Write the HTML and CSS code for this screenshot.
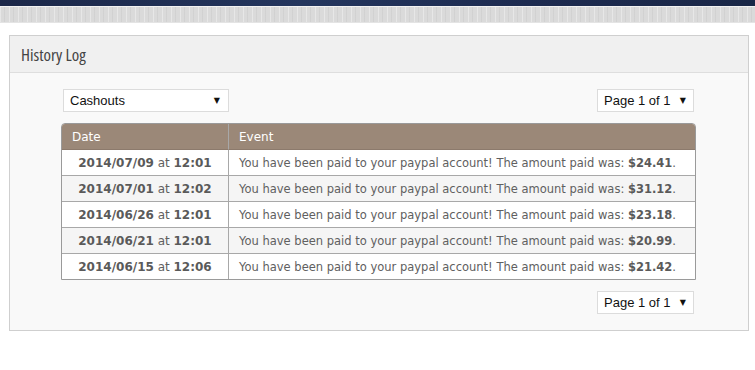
FILE: index.html
```html
<!DOCTYPE html>
<html lang="en">
<head>
  <meta charset="UTF-8" />
  <title>History Log</title>
  <link rel="stylesheet" href="styles.css">
</head>
<body>

  <!-- Top bars -->
  <div class="topbar"></div>
  <div class="subbar"></div>

  <!-- History panel -->
  <div class="panel">
    <div class="panel-head">History Log</div>
    <div class="panel-body">

      <div class="controls">
        <div class="pick pick-type">
          <select>
            <option>Cashouts</option>
            <option>Earnings</option>
          </select>
        </div>
        <div class="pick pick-page">
          <select>
            <option>Page 1 of 1</option>
          </select>
        </div>
      </div>

      <table class="log">
        <thead>
          <tr>
            <th class="col-date">Date</th>
            <th>Event</th>
          </tr>
        </thead>
        <tbody>
          <tr>
            <td class="col-date"><b>2014/07/09</b> at <b>12:01</b></td>
            <td>You have been paid to your paypal account! The amount paid was: <b>$24.41</b>.</td>
          </tr>
          <tr>
            <td class="col-date"><b>2014/07/01</b> at <b>12:02</b></td>
            <td>You have been paid to your paypal account! The amount paid was: <b>$31.12</b>.</td>
          </tr>
          <tr>
            <td class="col-date"><b>2014/06/26</b> at <b>12:01</b></td>
            <td>You have been paid to your paypal account! The amount paid was: <b>$23.18</b>.</td>
          </tr>
          <tr>
            <td class="col-date"><b>2014/06/21</b> at <b>12:01</b></td>
            <td>You have been paid to your paypal account! The amount paid was: <b>$20.99</b>.</td>
          </tr>
          <tr>
            <td class="col-date"><b>2014/06/15</b> at <b>12:06</b></td>
            <td>You have been paid to your paypal account! The amount paid was: <b>$21.42</b>.</td>
          </tr>
        </tbody>
      </table>

      <div class="controls controls-bottom">
        <div class="pick pick-page">
          <select>
            <option>Page 1 of 1</option>
          </select>
        </div>
      </div>

    </div>
  </div>

</body>
</html>
```

FILE: styles.css
```css
body {
  margin: 0;
  background-color: #fff;
  font-family: "DejaVu Sans", Verdana, sans-serif;
  color: #606060;
}

.topbar {
  height: 6px;
  background: linear-gradient(90deg, #1b2748 0%, #24365e 40%, #1d2b50 70%, #1a2747 100%);
}

.subbar {
  height: 15px;
  border-top: 1px solid #f2f2f2;
  background-color: #dadada;
  background-image: repeating-linear-gradient(90deg, rgba(255,255,255,0.35) 0 1px, transparent 1px 4px, rgba(0,0,0,0.04) 4px 5px, transparent 5px 9px);
  border-bottom: 1px solid #e4e4e4;
}

.panel {
  width: 738px;
  margin: 12px 0 0 9px;
  border: 1px solid #cfcfcf;
  background-color: #f9f9f9;
}

.panel-head {
  height: 36px;
  line-height: 37px;
  padding-left: 11px;
  background-color: #f0f0f0;
  border-bottom: 1px solid #dedede;
  font-family: "Open Sans", sans-serif;
  font-stretch: 87%;
  font-size: 17px;
  color: #444;
}

.panel-body {
  padding: 16px 52px 16px 51px;
}

.controls {
  display: flex;
  justify-content: space-between;
  padding: 0 2px;
}

.controls-bottom {
  justify-content: flex-end;
  margin-top: 11px;
}

.pick {
  position: relative;
}

.pick select {
  appearance: none;
  -webkit-appearance: none;
  height: 23px;
  border: 1px solid #dcdcdc;
  border-radius: 0;
  background-color: #fff;
  font-family: "Liberation Sans", Arial, sans-serif;
  color: #111;
  padding: 0 6px;
  outline: none;
}

.pick::after {
  content: "\25BC";
  position: absolute;
  top: 7px;
  font-size: 8px;
  color: #111;
  pointer-events: none;
}

.pick-type select {
  width: 166px;
  font-size: 13px;
}

.pick-type::after {
  right: 9px;
}

.pick-page select {
  width: 97px;
  font-size: 13px;
}

.pick-page::after {
  right: 8px;
}

.log {
  width: 100%;
  table-layout: fixed;
  margin-top: 11px;
  border-collapse: separate;
  border-spacing: 0;
  border: 1px solid #9a9a9a;
  border-radius: 4px 4px 0 0;
  background-color: #fff;
  font-size: 11.5px;
}

.log th {
  height: 25px;
  padding: 0 10px;
  background-color: #9b8878;
  color: #fff;
  font-size: 12px;
  font-weight: normal;
  text-align: left;
  border-bottom: 1px solid #8c7a6c;
}

.log th:first-child {
  border-radius: 3px 0 0 0;
}

.log th:last-child {
  border-radius: 0 3px 0 0;
}

.log td {
  height: 25px;
  padding: 0 10px;
  border-top: 1px solid #a8a8a8;
  white-space: nowrap;
}

.log tbody tr:first-child td {
  border-top: none;
}

.log tbody tr:nth-child(even) td {
  background-color: #f5f5f5;
}

.log .col-date {
  width: 146px;
  border-right: 1px solid #a8a8a8;
}

.log td.col-date {
  text-align: center;
  font-size: 12px;
}

.log b {
  color: #5a5a5a;
}
```
